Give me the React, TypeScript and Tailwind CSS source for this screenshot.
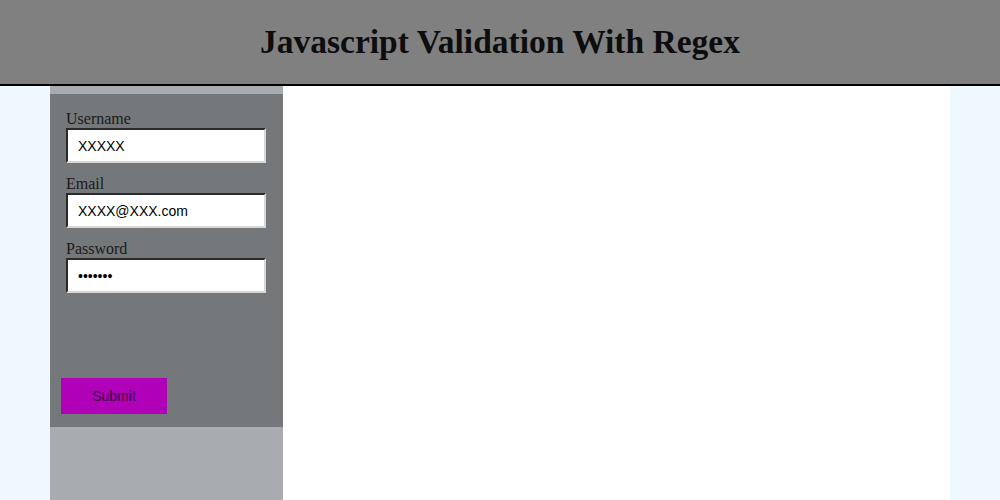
export default function App() {
  return (
    <div className="min-h-[500px] bg-[#f0f8ff] font-['Liberation_Serif',serif]">
      <header className="flex h-[86px] items-center justify-center border-b-2 border-black bg-[#808080]">
        <h1 className="text-[33.5px] font-bold text-[#0d0d0d]">Javascript Validation With Regex</h1>
      </header>
      <div className="mx-[50px] flex min-h-[414px] bg-white">
        <div className="w-[233px] bg-[#a8acb0] pt-[8px]">
          <form className="h-[333px] bg-[#75787a] pl-4 pt-[16px]" onSubmit={(e) => e.preventDefault()}>
            {[
              { label: 'Username', type: 'text', value: 'XXXXX' },
              { label: 'Email', type: 'text', value: 'XXXX@XXX.com' },
              { label: 'Password', type: 'password', value: 'xxxxxxx' },
            ].map((f) => (
              <div key={f.label} className="mb-[12px]">
                <label className="block text-[16px] leading-[18px] text-[#1a1a1a]">{f.label}</label>
                <input
                  type={f.type}
                  defaultValue={f.value}
                  className="block h-[35px] w-[200px] border-2 border-b-[#d8d8d8] border-l-[#2a2a2a] border-r-[#d8d8d8] border-t-[#2a2a2a] bg-white pl-[10px] font-['Liberation_Sans',sans-serif] text-[14px] text-black outline-none"
                />
              </div>
            ))}
            <button
              type="submit"
              className="-ml-[5px] mt-[73px] h-[36px] w-[106px] bg-[#b000b8] font-['Liberation_Sans',sans-serif] text-[14px] text-[#3a0040]"
            >
              Submit
            </button>
          </form>
        </div>
      </div>
    </div>
  );
}
